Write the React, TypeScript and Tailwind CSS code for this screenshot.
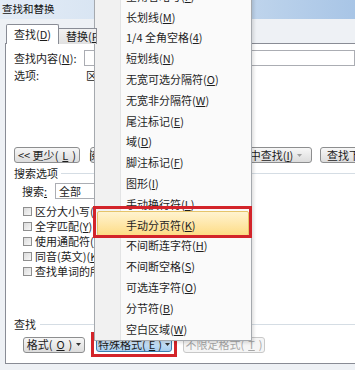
const menuItems: [string, string][] = [
  ["全角省略号", "F"],
  ["长划线", "M"],
  ["1/4 全角空格", "4"],
  ["短划线", "N"],
  ["无宽可选分隔符", "O"],
  ["无宽非分隔符", "W"],
  ["尾注标记", "E"],
  ["域", "D"],
  ["脚注标记", "F"],
  ["图形", "I"],
  ["手动换行符", "L"],
  ["手动分页符", "K"],
  ["不间断连字符", "H"],
  ["不间断空格", "S"],
  ["可选连字符", "O"],
  ["分节符", "B"],
  ["空白区域", "W"],
];

const checks: [string, string][] = [
  ["区分大小写", "H"],
  ["全字匹配", "Y"],
  ["使用通配符", "U"],
  ["同音(英文)", "K"],
  ["查找单词的所有形式(英文)", "W"],
];

function Key({ k }: { k: string }) {
  return (
    <>
      (<span className="underline underline-offset-1">{k}</span>)
    </>
  );
}

function Arrow({ dim = false }: { dim?: boolean }) {
  return (
    <svg width="5" height="3" viewBox="0 0 5 3" className="shrink-0">
      <path d="M0 0h5L2.5 3z" fill={dim ? "#a0a0a0" : "#333"} />
    </svg>
  );
}

function Btn({
  children,
  className = "",
  disabled = false,
}: {
  children: React.ReactNode;
  className?: string;
  disabled?: boolean;
}) {
  return (
    <div
      className={`h-[16px] shrink-0 flex items-center justify-center gap-[4px] rounded-[3px] border text-[11px] leading-none whitespace-nowrap ${
        disabled
          ? "border-[#c8c8c8] bg-[#f5f5f5] text-[#a6a6a6]"
          : "border-[#8d8e8f] bg-linear-to-b from-[#f7f7f7] to-[#dcdcdc] text-[#1c1c1c]"
      } ${className}`}
    >
      {children}
    </div>
  );
}

export default function App() {
  return (
    <div className="relative w-[355px] h-[370px] overflow-hidden flex flex-col bg-[#eef1f5] text-[#1c1c1c] font-['Noto_Sans_CJK_SC','Microsoft_YaHei',sans-serif]">
      {/* title bar */}
      <div className="h-[19px] shrink-0 px-[2px] bg-linear-to-r from-[#e4ecf6] via-[#cfdff0] to-[#a8c5e6] text-[10.5px] leading-[17px] text-[#111]">
        查找和替换
      </div>

      <div className="flex-1 pl-[5px]">
        {/* tabs */}
        <div className="mt-[5px] h-[20px] flex items-end -mb-[1px] relative z-10">
          <div className="ml-[1px] w-[53px] h-[20px] bg-white border border-b-0 border-[#898c95] rounded-t-[2px] pl-[7px] text-[11px] leading-[19px]">
            查找<Key k="D" />
          </div>
          <div className="w-[38px] h-[16px] bg-linear-to-b from-[#f2f2f2] to-[#e1e1e1] border border-b-0 border-l-0 border-[#898c95] pl-[7px] text-[11px] leading-[15px] whitespace-nowrap overflow-hidden">
            替换<Key k="P" />
          </div>
        </div>

        {/* page */}
        <div className="h-[321px] bg-white border border-r-0 border-[#898c95] pl-[8px] text-[11px]">
          <div className="mt-[6px] h-[16px] flex items-center">
            <div className="w-[70px] shrink-0 whitespace-nowrap">
              查找内容<Key k="N" />:
            </div>
            <div className="flex-1 h-[16px] border border-[#abadb3] bg-white" />
          </div>
          <div className="mt-[3px] h-[12px] flex items-center leading-none">
            <div className="w-[72px] shrink-0">选项:</div>
            <div className="whitespace-nowrap">区分全/半角</div>
          </div>

          <div className="mt-[66px] h-[16px] flex items-center">
            <Btn className="w-[66px]">
              {"<<"} 更少<Key k="L" />
            </Btn>
            <Btn className="ml-[10px] w-[96px]">
              阅读突出显示<Key k="R" />
              <Arrow />
            </Btn>
            <Btn className="ml-[10px] w-[116px]">
              <span>
                在以下项中查找<Key k="I" />
              </span>
              <Arrow dim />
            </Btn>
            <Btn className="ml-[8px] w-[84px] !justify-start pl-[6px]">
              查找下一处<Key k="F" />
            </Btn>
          </div>

          <div className="mt-[4px] h-[12px] flex items-center leading-none">
            <div className="shrink-0">搜索选项</div>
            <div className="flex-1 ml-[3px] h-px bg-[#d5dde4]" />
          </div>

          <div className="mt-[4px] h-[16px] flex items-center pl-[8px]">
            <div className="w-[33px] shrink-0">
              搜索<span className="underline">:</span>
            </div>
            <div className="w-[118px] h-[16px] border border-[#abadb3] pl-[3px] leading-[14px]">
              全部
            </div>
          </div>

          <div className="mt-[5px] pl-[9px]">
            {checks.map(([t, k]) => (
              <div key={t} className="h-[15px] flex items-center whitespace-nowrap">
                <div className="w-[9px] h-[9px] shrink-0 border border-[#8f8f8f] bg-linear-to-br from-[#dcdcdc] to-[#f7f7f7]" />
                <div className="ml-[3px] leading-none">
                  {t}
                  <Key k={k} />
                </div>
              </div>
            ))}
          </div>

          <div className="mt-[39px] h-[12px] flex items-center leading-none">
            <div className="shrink-0">查找</div>
            <div className="flex-1 ml-[4px] h-px bg-[#d5dde4]" />
          </div>

          <div className="mt-[2px] h-[25px] flex items-center pl-[9px]">
            <Btn className="w-[62px]">
              格式<Key k="O" />
              <Arrow />
            </Btn>
            <div className="ml-[6px] border-[3px] border-[#d3242a] p-[2px]">
              <div className="h-[15px] w-[76px] flex items-center justify-center gap-[3px] rounded-[3px] border border-[#3c7fb1] bg-linear-to-b from-[#dcedfc] to-[#a7cdef] text-[11px] leading-none whitespace-nowrap">
                特殊格式<Key k="E" />
                <Arrow />
              </div>
            </div>
            <Btn disabled className="ml-[6px] w-[82px]">
              不限定格式<Key k="T" />
            </Btn>
          </div>
        </div>
      </div>

      {/* special format dropdown */}
      <div className="absolute left-[94px] top-[-15px] w-[158px] border border-[#a5a9ae] bg-[#fafafa] shadow-[2px_2px_3px_rgba(0,0,0,0.12)] text-[11px] text-[#1e1e1e]">
        {menuItems.map(([t, k], i) => (
          <div key={i} className="relative h-[20.8px] flex items-center">
            {i === 11 && (
              <div className="absolute left-[2px] right-[2px] top-[-4px] bottom-0 rounded-[2px] border border-[#e6c46a] bg-linear-to-b from-[#fff3cf] to-[#fddc85]" />
            )}
            <div className="w-[26px] h-full shrink-0 border-r border-[#e3e4e5] bg-[#f1f1f1]" />
            <div className="relative pl-[5px] whitespace-nowrap leading-none">
              {t}
              <Key k={k} />
            </div>
          </div>
        ))}
      </div>

      {/* annotation box */}
      <div className="absolute left-[93px] top-[206px] w-[159px] h-[32px] border-[3px] border-[#d3242a]" />
    </div>
  );
}
